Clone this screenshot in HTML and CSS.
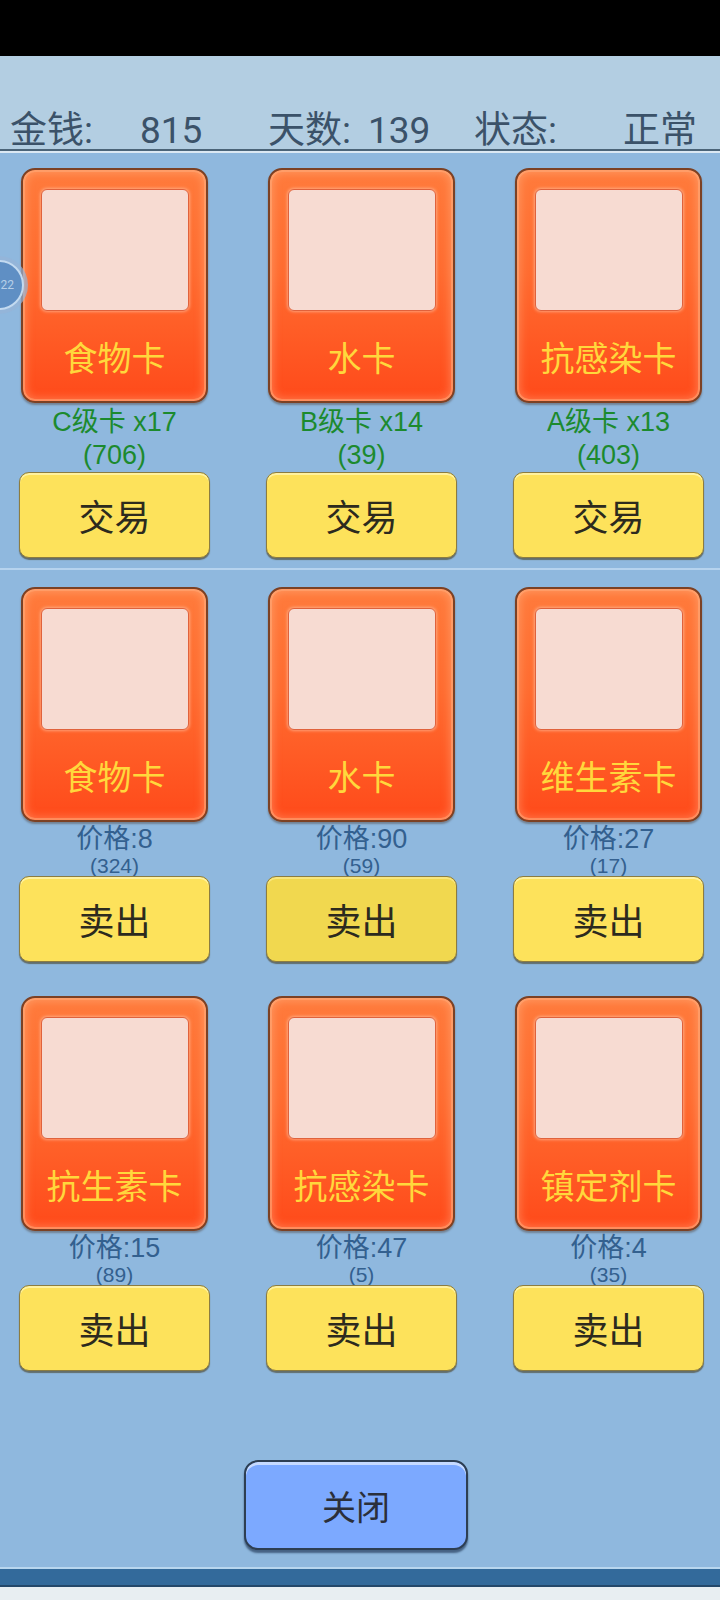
FILE: index.html
```html
<!DOCTYPE html>
<html lang="zh">
<head>
<meta charset="utf-8">
<title>交易</title>
<link rel="stylesheet" href="styles.css">
</head>
<body>
<div class="status-bar"></div>
<header class="hud">
  <div class="hud-row">
    <span>金钱:</span><span>815</span><span>天数:</span><span>139</span><span>状态:</span><span>正常</span>
  </div>
</header>
<div class="hud-rule"></div>
<main class="panel">
  <div class="float-badge"><span>22</span></div>
  <section class="grid trade">
    <div class="cell">
      <div class="card"><div class="pic"></div><div class="label">食物卡</div></div>
      <div class="info green"><div>C级卡 x17</div><div>(706)</div></div>
      <button class="btn">交易</button>
    </div>
    <div class="cell">
      <div class="card"><div class="pic"></div><div class="label">水卡</div></div>
      <div class="info green"><div>B级卡 x14</div><div>(39)</div></div>
      <button class="btn">交易</button>
    </div>
    <div class="cell">
      <div class="card"><div class="pic"></div><div class="label">抗感染卡</div></div>
      <div class="info green"><div>A级卡 x13</div><div>(403)</div></div>
      <button class="btn">交易</button>
    </div>
  </section>
  <div class="divider"></div>
  <section class="grid sell">
    <div class="cell">
      <div class="card"><div class="pic"></div><div class="label">食物卡</div></div>
      <div class="info price"><div class="p">价格:8</div><div class="s">(324)</div></div>
      <button class="btn">卖出</button>
    </div>
    <div class="cell">
      <div class="card"><div class="pic"></div><div class="label">水卡</div></div>
      <div class="info price"><div class="p">价格:90</div><div class="s">(59)</div></div>
      <button class="btn pressed">卖出</button>
    </div>
    <div class="cell">
      <div class="card"><div class="pic"></div><div class="label">维生素卡</div></div>
      <div class="info price"><div class="p">价格:27</div><div class="s">(17)</div></div>
      <button class="btn">卖出</button>
    </div>
    <div class="cell">
      <div class="card"><div class="pic"></div><div class="label">抗生素卡</div></div>
      <div class="info price"><div class="p">价格:15</div><div class="s">(89)</div></div>
      <button class="btn">卖出</button>
    </div>
    <div class="cell">
      <div class="card"><div class="pic"></div><div class="label">抗感染卡</div></div>
      <div class="info price"><div class="p">价格:47</div><div class="s">(5)</div></div>
      <button class="btn">卖出</button>
    </div>
    <div class="cell">
      <div class="card"><div class="pic"></div><div class="label">镇定剂卡</div></div>
      <div class="info price"><div class="p">价格:4</div><div class="s">(35)</div></div>
      <button class="btn">卖出</button>
    </div>
  </section>
  <div class="close-wrap"><button class="close">关闭</button></div>
</main>
<footer class="bottom-bar"></footer>
<div class="nav-strip"></div>
</body>
</html>
```
FILE: styles.css
```css
html, body {
  margin: 0;
  padding: 0;
}
body {
  width: 720px;
  height: 1600px;
  overflow: hidden;
  background: #8fb8de;
  font-family: Roboto, "Noto Sans CJK SC", sans-serif;
}
.status-bar {
  height: 56px;
  background: #000;
}
.hud {
  height: 93px;
  background: #b3cee2;
  border-bottom: 2px solid #4b6478;
  overflow: hidden;
  display: flex;
  align-items: flex-end;
}
.hud-row {
  display: grid;
  grid-template-columns: 130px 128px 100px 106px 149px auto;
  padding-left: 10px;
  font-size: 37px;
  line-height: 38px;
  color: #3b5269;
  margin-bottom: -1px;
  white-space: nowrap;
}
.hud-rule {
  height: 2px;
  background: #dbe8f3;
}
.panel {
  position: relative;
  height: 1414px;
  padding-top: 15px;
  box-sizing: border-box;
  background: #8fb8de;
}
.float-badge {
  position: absolute;
  left: -26px;
  top: 107px;
  width: 50px;
  height: 50px;
  box-sizing: border-box;
  border-radius: 50%;
  background: #5f8fc4;
  border: 2px solid #c3daf0;
  box-shadow: 0 0 0 4px rgba(150, 180, 215, 0.7);
  display: flex;
  align-items: center;
  justify-content: flex-end;
  padding-right: 8px;
  font-size: 12px;
  color: #b7cfe8;
}
.grid {
  display: grid;
  grid-template-columns: repeat(3, 187px);
  column-gap: 60px;
  padding-left: 21px;
}
.sell {
  row-gap: 34px;
  padding-top: 17px;
}
.cell {
  display: flex;
  flex-direction: column;
  align-items: center;
}
.card {
  width: 187px;
  height: 235px;
  box-sizing: border-box;
  border: 2px solid #7c4124;
  border-radius: 14px;
  background: linear-gradient(180deg, #ff7b3c 0%, #ff6c30 45%, #ff4a1a 100%);
  box-shadow: inset 0 0 0 2px rgba(255, 170, 120, 0.55), inset 0 0 8px 3px rgba(255, 205, 165, 0.35), 0 2px 2px rgba(60, 30, 10, 0.35);
  display: flex;
  flex-direction: column;
  align-items: center;
}
.pic {
  width: 148px;
  height: 122px;
  margin-top: 19px;
  box-sizing: border-box;
  background: #f7dbd2;
  border: 1.5px solid #e0623c;
  border-radius: 6px;
  box-shadow: 0 0 3px 1px rgba(255, 200, 170, 0.6);
}
.label {
  flex: 1;
  display: flex;
  align-items: center;
  font-size: 34px;
  color: #ffd83c;
  white-space: nowrap;
}
.info {
  width: 187px;
  text-align: center;
  white-space: nowrap;
  font-family: "Liberation Sans", "Noto Sans CJK SC", sans-serif;
}
.green {
  height: 69px;
  box-sizing: border-box;
  padding-top: 3px;
  font-size: 27px;
  line-height: 33px;
  color: #1c8a2e;
}
.price {
  height: 54px;
  box-sizing: border-box;
  padding-top: 3px;
  color: #33608f;
}
.price .p {
  font-size: 27px;
  line-height: 28px;
}
.price .s {
  font-size: 21px;
  line-height: 25px;
}
.btn {
  width: 191px;
  height: 86px;
  flex: none;
  box-sizing: border-box;
  border: 1px solid #8c7c40;
  border-radius: 10px;
  background: #fde25b;
  box-shadow: inset 0 2px 0 #fff2a0, 0 2px 1px rgba(70, 60, 30, 0.6);
  font-family: Roboto, "Noto Sans CJK SC", sans-serif;
  font-size: 36px;
  color: #2c2a1e;
  padding: 0;
}
.btn.pressed {
  background: #f1d84f;
  box-shadow: inset 0 2px 0 #f8e67e, 0 2px 1px rgba(70, 60, 30, 0.6);
}
.divider {
  height: 2px;
  margin-top: 10px;
  background: #b6d3ee;
}
.close-wrap {
  display: flex;
  justify-content: center;
  padding-right: 8px;
  margin-top: 89px;
}
.close {
  width: 224px;
  height: 90px;
  box-sizing: border-box;
  border: 2px solid #2d3e52;
  border-radius: 14px;
  background: #7ca9ff;
  box-shadow: inset 0 3px 0 rgba(230, 240, 255, 0.7), 0 3px 2px rgba(20, 40, 70, 0.6);
  font-family: Roboto, "Noto Sans CJK SC", sans-serif;
  font-size: 34px;
  color: #2b2f3a;
  padding: 0;
}
.bottom-bar {
  height: 16px;
  background: #336a9b;
  border-top: 2px solid #b8d6ee;
  border-bottom: 2px solid #24486a;
}
.nav-strip {
  height: 13px;
  background: #e8eef2;
}
```
